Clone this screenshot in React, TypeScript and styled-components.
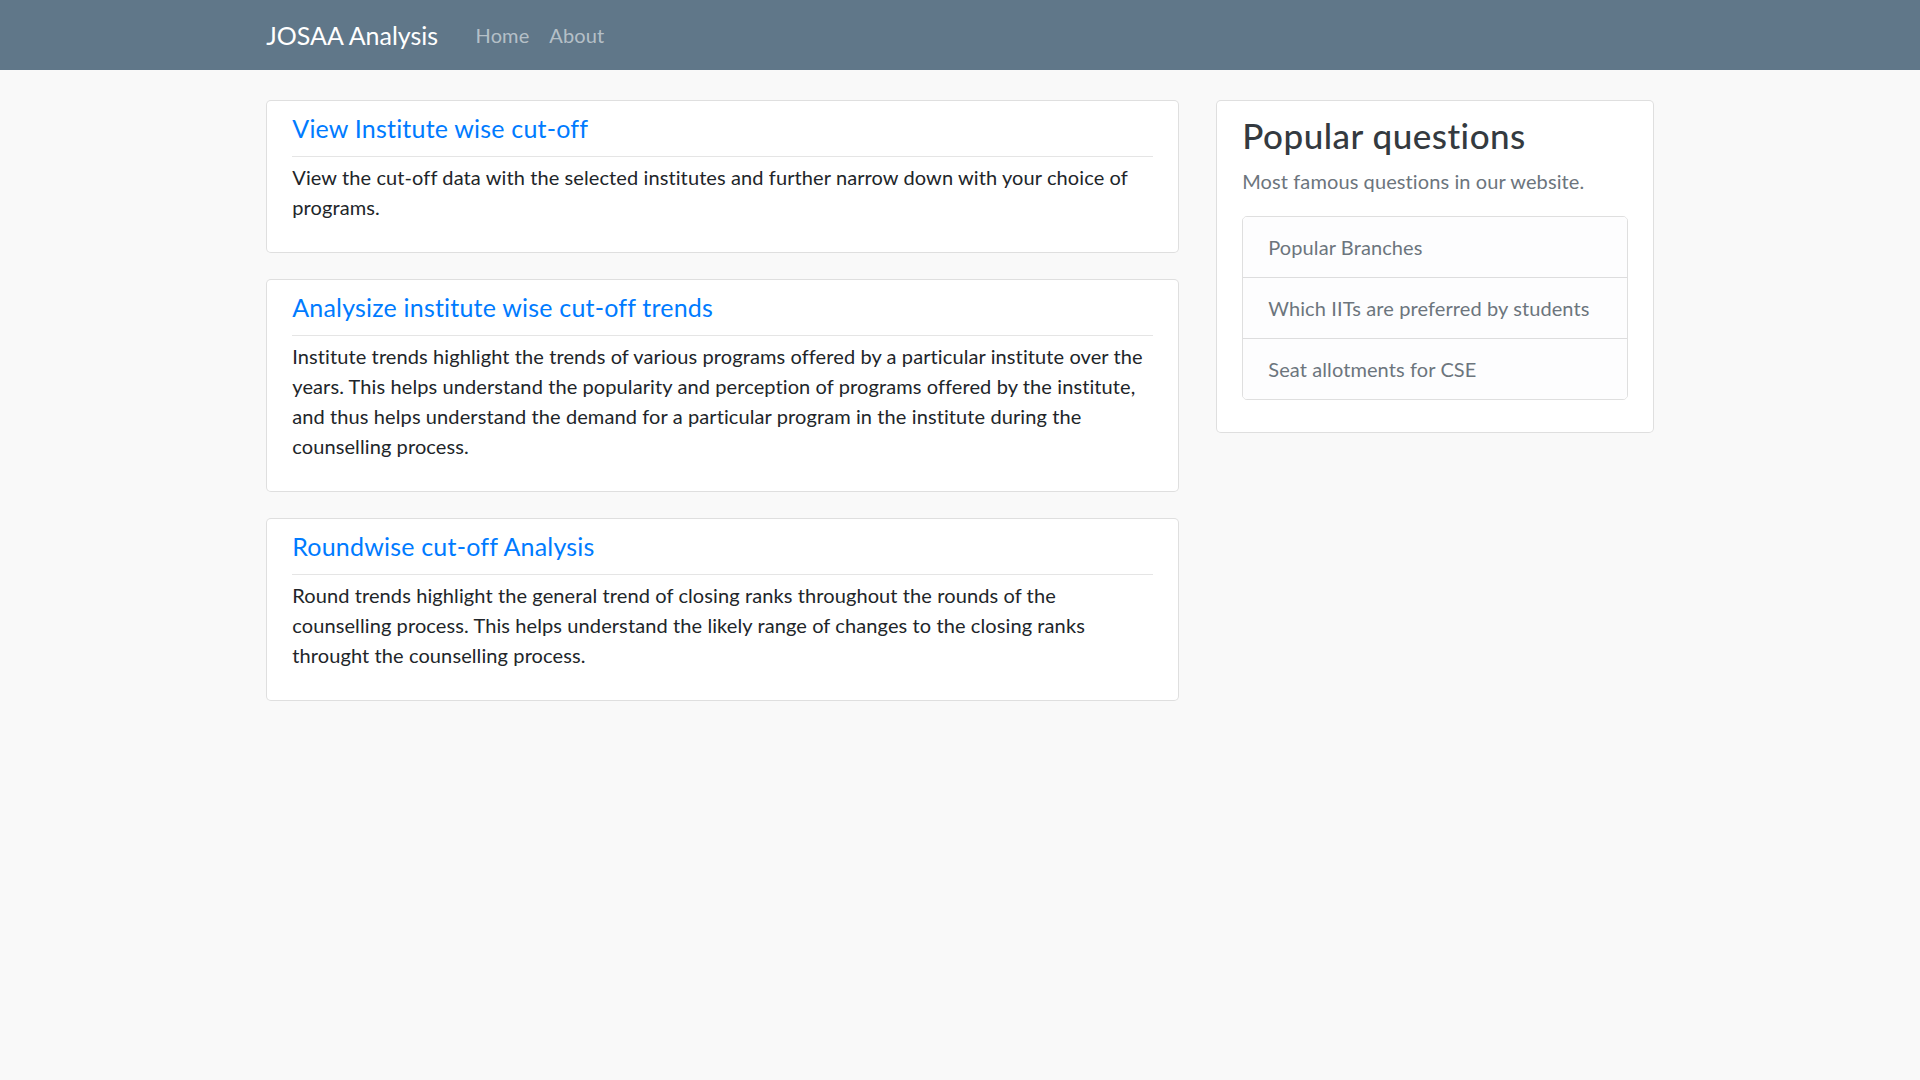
import React from "react";
import styled, { createGlobalStyle } from "styled-components";

const GlobalStyle = createGlobalStyle`
  html, body {
    margin: 0;
    padding: 0;
  }
  body {
    background: #f9f9f9;
    font-family: "Lato", "Roboto", "Liberation Sans", sans-serif;
    font-size: 20px;
    line-height: 30px;
    letter-spacing: 0.1px;
    color: #212529;
    min-height: 1080px;
  }
  * { box-sizing: border-box; }
`;

const Navbar = styled.nav`
  height: 70px;
  background: #607789;
`;

const Container = styled.div`
  max-width: 1425px;
  margin: 0 auto;
  padding: 0 18.75px;
`;

const NavInner = styled(Container)`
  height: 100%;
  display: flex;
  align-items: center;
`;

const Brand = styled.a`
  font-size: 25px;
  line-height: 37.5px;
  color: #fff;
  text-decoration: none;
  margin-right: 27.5px;
  padding-top: 2px;
  letter-spacing: 0;
`;

const NavList = styled.ul`
  display: flex;
  list-style: none;
  margin: 0;
  padding: 0;
`;

const NavLink = styled.a`
  display: block;
  padding: 0 10px;
  font-size: 20px;
  line-height: 30px;
  color: rgba(255, 255, 255, 0.55);
  text-decoration: none;
`;

const Main = styled(Container)`
  margin-top: 30px;
  display: grid;
  grid-template-columns: minmax(0, 912.5fr) minmax(0, 437.5fr);
  column-gap: 37.5px;
  align-items: start;
`;

const Column = styled.div`
  display: flex;
  flex-direction: column;
  gap: 26px;
`;

const Card = styled.section`
  background: #fff;
  border: 1px solid rgba(0, 0, 0, 0.125);
  border-radius: 5px;
  padding: 12px 25px 10px;
`;

const SideCard = styled(Card)`
  padding: 13px 25px 12px;
`;

const CardTitle = styled.a`
  display: block;
  font-size: 25px;
  line-height: 30px;
  font-weight: 400;
  letter-spacing: 0.2px;
  color: #007bff;
  text-decoration: none;
  margin: 0 0 13px;
`;

const Rule = styled.hr`
  border: 0;
  border-top: 1px solid rgba(0, 0, 0, 0.1);
  margin: 0 0 5px;
`;

const CardText = styled.p`
  margin: 0 0 20px;
  font-size: 20px;
  line-height: 30px;
  color: #212529;
`;

const SideTitle = styled.h3`
  margin: 0 0 10px;
  font-size: 35px;
  line-height: 42px;
  font-weight: 500;
  letter-spacing: 0.5px;
  color: #343a40;
`;

const Lead = styled.p`
  margin: 0 0 20px;
  color: #6c757d;
`;

const ListGroup = styled.div`
  display: flex;
  flex-direction: column;
  border: 1px solid rgba(0, 0, 0, 0.125);
  border-radius: 5px;
  overflow: hidden;
  margin-bottom: 20px;
`;

const ListItem = styled.a`
  display: block;
  padding: 15px 25px;
  background: #fdfdfe;
  color: #6c757d;
  text-decoration: none;
  line-height: 30px;
  & + & {
    border-top: 1px solid rgba(0, 0, 0, 0.125);
  }
`;

const features = [
  {
    title: "View Institute wise cut-off",
    text: "View the cut-off data with the selected institutes and further narrow down with your choice of programs.",
  },
  {
    title: "Analysize institute wise cut-off trends",
    text: "Institute trends highlight the trends of various programs offered by a particular institute over the years. This helps understand the popularity and perception of programs offered by the institute, and thus helps understand the demand for a particular program in the institute during the counselling process.",
  },
  {
    title: "Roundwise cut-off Analysis",
    text: "Round trends highlight the general trend of closing ranks throughout the rounds of the counselling process. This helps understand the likely range of changes to the closing ranks throught the counselling process.",
  },
];

const questions = [
  "Popular Branches",
  "Which IITs are preferred by students",
  "Seat allotments for CSE",
];

export default function App() {
  return (
    <>
      <GlobalStyle />
      <Navbar>
        <NavInner>
          <Brand href="#">JOSAA Analysis</Brand>
          <NavList>
            <li>
              <NavLink href="#">Home</NavLink>
            </li>
            <li>
              <NavLink href="#">About</NavLink>
            </li>
          </NavList>
        </NavInner>
      </Navbar>
      <Main>
        <Column>
          {features.map((f) => (
            <Card key={f.title}>
              <CardTitle href="#">{f.title}</CardTitle>
              <Rule />
              <CardText>{f.text}</CardText>
            </Card>
          ))}
        </Column>
        <Column>
          <SideCard>
            <SideTitle>Popular questions</SideTitle>
            <Lead>Most famous questions in our website.</Lead>
            <ListGroup>
              {questions.map((q) => (
                <ListItem key={q} href="#">
                  {q}
                </ListItem>
              ))}
            </ListGroup>
          </SideCard>
        </Column>
      </Main>
    </>
  );
}
